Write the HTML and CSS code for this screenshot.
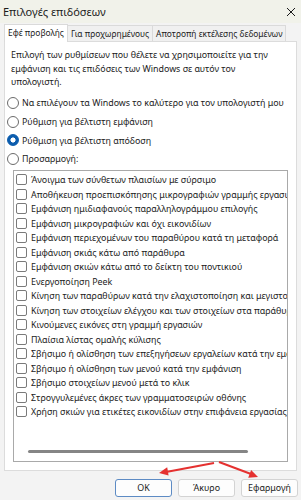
FILE: index.html
```html
<!doctype html>
<html>
<head>
  <meta charset="utf-8">
  <title>Επιλογές επιδόσεων</title>
  <link rel="stylesheet" href="styles.css">
</head>
<body>
  <div class="window">
    <div class="titlebar">
      <span class="title">Επιλογές επιδόσεων</span>
      <svg class="close" width="10" height="10" viewBox="0 0 10 10"><path d="M1 1L9 9M9 1L1 9" stroke="#1a1a1a" stroke-width="1" fill="none"/></svg>
    </div>
    <div class="tabs">
      <span class="tab active">Εφέ προβολής</span>
      <span class="tab">Για προχωρημένους</span>
      <span class="tab">Αποτροπή εκτέλεσης δεδομένων</span>
    </div>
    <div class="panel">
      <p class="intro">Επιλογή των ρυθμίσεων που θέλετε να χρησιμοποιείτε για την εμφάνιση και τις επιδόσεις των Windows σε αυτόν τον υπολογιστή.</p>
      <div class="radio"><span class="dot"></span>Να επιλέγουν τα Windows το καλύτερο για τον υπολογιστή μου</div>
      <div class="radio"><span class="dot"></span>Ρύθμιση για βέλτιστη εμφάνιση</div>
      <div class="radio"><span class="dot on"></span>Ρύθμιση για βέλτιστη απόδοση</div>
      <div class="radio"><span class="dot"></span>Προσαρμογή:</div>
      <div class="listbox">
        <div class="items">
          <div class="item"><span class="box"></span>Άνοιγμα των σύνθετων πλαισίων με σύρσιμο</div>
          <div class="item"><span class="box"></span>Αποθήκευση προεπισκόπησης μικρογραφιών γραμμής εργασιών</div>
          <div class="item"><span class="box"></span>Εμφάνιση ημιδιαφανούς παραλληλογράμμου επιλογής</div>
          <div class="item"><span class="box"></span>Εμφάνιση μικρογραφιών και όχι εικονιδίων</div>
          <div class="item"><span class="box"></span>Εμφάνιση περιεχομένων του παραθύρου κατά τη μεταφορά</div>
          <div class="item"><span class="box"></span>Εμφάνιση σκιάς κάτω από παράθυρα</div>
          <div class="item"><span class="box"></span>Εμφάνιση σκιών κάτω από το δείκτη του ποντικιού</div>
          <div class="item"><span class="box"></span>Ενεργοποίηση Peek</div>
          <div class="item"><span class="box"></span>Κίνηση των παραθύρων κατά την ελαχιστοποίηση και μεγιστοποίηση</div>
          <div class="item"><span class="box"></span>Κίνηση των στοιχείων ελέγχου και των στοιχείων στα παράθυρα</div>
          <div class="item"><span class="box"></span>Κινούμενες εικόνες στη γραμμή εργασιών</div>
          <div class="item"><span class="box"></span>Πλαίσια λίστας ομαλής κύλισης</div>
          <div class="item"><span class="box"></span>Σβήσιμο ή ολίσθηση των επεξηγήσεων εργαλείων κατά την εμφάνιση</div>
          <div class="item"><span class="box"></span>Σβήσιμο ή ολίσθηση των μενού κατά την εμφάνιση</div>
          <div class="item"><span class="box"></span>Σβήσιμο στοιχείων μενού μετά το κλικ</div>
          <div class="item"><span class="box"></span>Στρογγυλεμένες άκρες των γραμματοσειρών οθόνης</div>
          <div class="item"><span class="box"></span>Χρήση σκιών για ετικέτες εικονιδίων στην επιφάνεια εργασίας</div>
        </div>
        <div class="hscroll"><span class="thumb"></span></div>
      </div>
    </div>
    <div class="buttons">
      <span class="btn default">OK</span>
      <span class="btn">Άκυρο</span>
      <span class="btn">Εφαρμογή</span>
    </div>
    <svg class="arrows" width="301" height="500" viewBox="0 0 301 500">
      <g stroke="#e53130" stroke-width="2" fill="#e53130">
        <line x1="214" y1="463" x2="166" y2="472"/>
        <polygon stroke="none" points="159,473 168.6,475.6 167.2,467.3"/>
        <line x1="219" y1="462" x2="251" y2="474"/>
        <polygon stroke="none" points="258,477 248.2,477.8 251.1,469.9"/>
      </g>
    </svg>
  </div>
</body>
</html>
```

FILE: styles.css
```css
body {
  margin: 0;
  background: #f3f3f3;
  font-family: "Noto Sans", "Open Sans", sans-serif;
  font-size: 8.9px;
  color: #1b1b1b;
}
.window {
  position: relative;
  width: 301px;
  height: 500px;
  overflow: hidden;
}
.titlebar {
  display: flex;
  align-items: center;
  justify-content: space-between;
  height: 23px;
  padding: 0 5px 0 3px;
  background: #f1f2ea;
  font-size: 11px;
}
.close { margin-top: 1px; }
.tabs {
  display: flex;
  height: 17px;
  padding: 1px 0 0 4px;
  align-items: flex-end;
}
.tab {
  height: 15px;
  line-height: 15px;
  padding: 0 3px;
  font-size: 8.4px;
  background: #f0f0f0;
  border: 1px solid #dadada;
  border-bottom: none;
  margin-right: -1px;
  white-space: nowrap;
}
.tab.active {
  height: 17px;
  margin-bottom: -1px;
  background: #fff;
  position: relative;
  z-index: 1;
}
.panel {
  margin: 0 4px;
  height: 428px;
  background: #fff;
  border: 1px solid #dcdcdc;
  padding: 0 8px 0 2px;
}
.intro {
  margin: 6px 0 5px 4px;
  line-height: 13.5px;
}
.radio {
  display: flex;
  align-items: center;
  height: 18.7px;
  white-space: nowrap;
}
.dot {
  flex: none;
  width: 10px;
  height: 10px;
  border: 1px solid #6b6b6b;
  border-radius: 50%;
  margin-right: 3px;
  background: #fff;
}
.dot.on {
  border-color: #0b5cad;
  background: radial-gradient(circle, #fff 0 2.3px, #0b5cad 2.8px);
}
.listbox {
  margin: 2px 0 0 6px;
  height: 290px;
  border: 1px solid #a9a9a9;
  display: flex;
  flex-direction: column;
  overflow: hidden;
}
.items {
  flex: 1;
  padding-top: 1px;
}
.item {
  display: flex;
  align-items: center;
  height: 14.5px;
  white-space: nowrap;
  padding-left: 2px;
}
.box {
  flex: none;
  width: 9px;
  height: 9px;
  border: 1px solid #7a7a7a;
  border-radius: 2px;
  margin-right: 4px;
  background: #fff;
}
.hscroll {
  height: 11px;
  padding: 0 0 0 14px;
}
.thumb {
  display: block;
  width: 220px;
  height: 3px;
  border-radius: 2px;
  background: #858585;
}
.buttons {
  display: flex;
  justify-content: flex-end;
  gap: 6px;
  padding: 8px 3px 0 0;
}
.btn {
  width: 55px;
  height: 16px;
  line-height: 16px;
  text-align: center;
  background: #fdfdfd;
  border: 1px solid #d3d3d3;
  border-radius: 3px;
}
.btn.default { border-color: #5d8bc4; }
.arrows {
  position: absolute;
  left: 0;
  top: 0;
}
```
